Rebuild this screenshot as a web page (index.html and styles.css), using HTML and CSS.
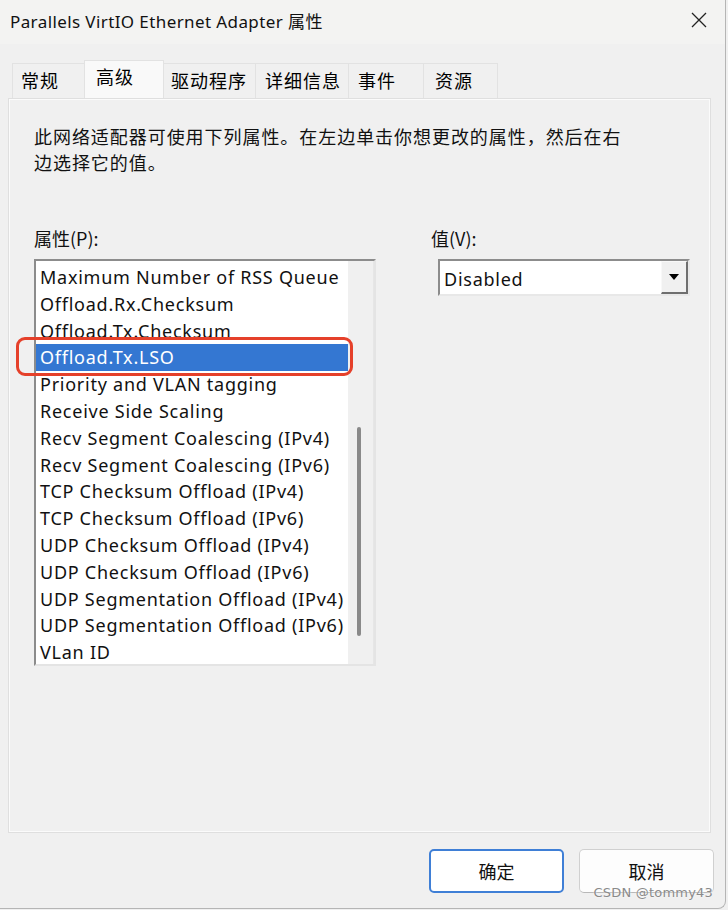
FILE: index.html
```html
<!DOCTYPE html>
<html lang="zh-CN">
<head>
<meta charset="utf-8">
<title>Parallels VirtIO Ethernet Adapter 属性</title>
<link rel="stylesheet" href="styles.css">
</head>
<body>
<div class="window">
  <div class="titlebar">
    <span class="title">Parallels VirtIO Ethernet Adapter 属性</span>
    <svg class="close" width="18" height="18" viewBox="0 0 18 18"><path d="M2 2 L16 16 M16 2 L2 16" stroke="#222" stroke-width="1.3" fill="none"/></svg>
  </div>
  <div class="tabs">
    <div class="tab t1">常规</div>
    <div class="tab active">高级</div>
    <div class="tab t3">驱动程序</div>
    <div class="tab t4">详细信息</div>
    <div class="tab t5">事件</div>
    <div class="tab t6">资源</div>
  </div>
  <div class="panel">
    <p class="desc">此网络适配器可使用下列属性。在左边单击你想更改的属性，然后在右<br>边选择它的值。</p>
    <div class="cols">
      <div class="col-left">
        <div class="label">属性(P):</div>
        <div class="listbox">
          <ul class="items">
            <li>Maximum Number of RSS Queue</li>
            <li>Offload.Rx.Checksum</li>
            <li>Offload.Tx.Checksum</li>
            <li class="sel">Offload.Tx.LSO</li>
            <li>Priority and VLAN tagging</li>
            <li>Receive Side Scaling</li>
            <li>Recv Segment Coalescing (IPv4)</li>
            <li>Recv Segment Coalescing (IPv6)</li>
            <li>TCP Checksum Offload (IPv4)</li>
            <li>TCP Checksum Offload (IPv6)</li>
            <li>UDP Checksum Offload (IPv4)</li>
            <li>UDP Checksum Offload (IPv6)</li>
            <li>UDP Segmentation Offload (IPv4)</li>
            <li>UDP Segmentation Offload (IPv6)</li>
            <li>VLan ID</li>
          </ul>
          <div class="track"><div class="thumb"></div></div>
          <div class="highlight"></div>
        </div>
      </div>
      <div class="col-right">
        <div class="label">值(V):</div>
        <div class="combo">
          <span class="combo-text">Disabled</span>
          <span class="combo-btn"><svg width="10" height="6" viewBox="0 0 10 6"><path d="M0 0 H10 L5 6 Z" fill="#000"/></svg></span>
        </div>
      </div>
    </div>
  </div>
  <div class="buttons">
    <button class="btn primary">确定</button>
    <button class="btn">取消</button>
  </div>
  <div class="watermark">CSDN @tommy43</div>
</div>
</body>
</html>
```
FILE: styles.css
```css
* { box-sizing: border-box; }
html, body { margin: 0; padding: 0; }
body {
  background: #f0f0f0;
  font-family: "Noto Sans", "Noto Sans CJK SC", sans-serif;
  color: #000;
}
.window {
  position: relative;
  width: 726px;
  height: 909px;
  background: #f0f0f0;
  border-right: 1px solid #b5b5b5;
  border-bottom: 1px solid #b5b5b5;
  border-bottom-right-radius: 8px;
  display: flex;
  flex-direction: column;
}
.titlebar {
  height: 44px;
  background: #f3f3f2;
  display: flex;
  align-items: center;
  justify-content: space-between;
  padding: 0 17px 4px 10px;
}
.title {
  font-family: "Noto Sans", "Noto Sans CJK SC", sans-serif;
  font-size: 17px;
  letter-spacing: 0.4px;
  color: #111;
}
.close { display: block; }
.tabs {
  display: flex;
  align-items: flex-end;
  margin-top: 16px;
  padding-left: 12px;
  height: 38px;
}
.tab {
  height: 35px;
  background: #f0f0f0;
  border: 1px solid #e2e2e2;
  border-bottom: none;
  font-family: "Noto Sans CJK SC", sans-serif;
  font-size: 18px;
  letter-spacing: 1px;
  line-height: 33px;
  padding-left: 8px;
  margin-right: -1px;
  white-space: nowrap;
}
.t1 { width: 73px; }
.active {
  width: 80px;
  height: 38px;
  background: #f9f9f9;
  line-height: 30px;
  padding-left: 11px;
  position: relative;
  z-index: 1;
}
.t3 { width: 93px; padding-left: 7px; }
.t4 { width: 94px; padding-left: 9px; }
.t5 { width: 76px; padding-left: 9px; }
.t6 { width: 75px; padding-left: 11px; }
.panel {
  margin: 0 14px 0 8px;
  height: 735px;
  border: 1px solid #dfdfdf;
  box-shadow: inset 1px 1px 0 #fbfbfb, inset -1px -1px 0 #fbfbfb;
  padding: 24px 0 0 25px;
}
.desc {
  margin: 0;
  font-family: "Noto Sans CJK SC", sans-serif;
  font-size: 18px;
  letter-spacing: 0.95px;
  line-height: 26px;
  color: #111;
}
.cols {
  display: flex;
  margin-top: 51px;
}
.label {
  font-family: "Noto Sans CJK SC", sans-serif;
  font-size: 18px;
  line-height: 24px;
  height: 33px;
  color: #111;
}
.col-left { width: 342px; }
.col-right { margin-left: 55px; }
.col-right .combo { margin-left: 7px; }
.listbox {
  position: relative;
  height: 407px;
  border-top: 2px solid #8c8c8c;
  border-left: 2px solid #8c8c8c;
  border-right: 2px solid #e4e4e4;
  border-bottom: 2px solid #e4e4e4;
  display: flex;
  background: #fff;
}
.items {
  list-style: none;
  margin: 0;
  padding: 3px 0 0 0;
  width: 312px;
  background: #fff;
  font-family: "Noto Sans", "Noto Sans CJK SC", sans-serif;
  font-size: 18px;
  letter-spacing: 0.75px;
  color: #111;
}
.items li {
  height: 26.8px;
  line-height: 26px;
  padding-left: 3px;
  margin-left: 1px;
  white-space: nowrap;
}
.items li.sel {
  background: #3477d2;
  color: #fff;
  margin-left: 0;
  padding-left: 4px;
}
.track {
  width: 26px;
  background: #f0f0f0;
  border-right: 1px solid #e6e6e6;
  position: relative;
}
.thumb {
  position: absolute;
  left: 9px;
  top: 166px;
  width: 4px;
  height: 209px;
  border-radius: 2px;
  background: #8a8a8a;
}
.highlight {
  position: absolute;
  left: -20px;
  top: 76px;
  width: 337px;
  height: 39px;
  border: 3.5px solid #e5402a;
  border-radius: 9px;
}
.combo {
  width: 252px;
  height: 37px;
  border-top: 2px solid #8c8c8c;
  border-left: 2px solid #8c8c8c;
  border-right: 2px solid #e8e8e8;
  border-bottom: 2px solid #e8e8e8;
  background: #fff;
  display: flex;
  align-items: stretch;
  justify-content: space-between;
}
.combo-text {
  font-family: "Noto Sans", sans-serif;
  font-size: 18px;
  letter-spacing: 0.75px;
  line-height: 36px;
  padding-left: 4px;
  color: #111;
}
.combo-btn {
  width: 27px;
  background: #f0f0f0;
  border-left: 1px solid #f8f8f8;
  border-top: 1px solid #f8f8f8;
  border-right: 2px solid #6e6e6e;
  border-bottom: 2px solid #6e6e6e;
  display: flex;
  align-items: center;
  justify-content: center;
}
.buttons {
  display: flex;
  justify-content: flex-end;
  gap: 15px;
  padding-right: 11px;
  margin-top: 16px;
}
.btn {
  width: 135px;
  height: 44px;
  border-radius: 5px;
  background: #fdfdfd;
  border: 1px solid #d0d0d0;
  border-bottom-color: #b8b8b8;
  font-family: "Noto Sans CJK SC", sans-serif;
  font-size: 18px;
  color: #111;
  padding: 0;
}
.btn.primary {
  border: 2px solid #3f7fd6;
  background: #fff;
}
.watermark {
  position: absolute;
  right: 12px;
  bottom: 8px;
  font-family: "DejaVu Sans", sans-serif;
  font-size: 13px;
  color: #8a8a8a;
  text-shadow: 0 0 2px #fff;
  letter-spacing: 0.2px;
}
```
